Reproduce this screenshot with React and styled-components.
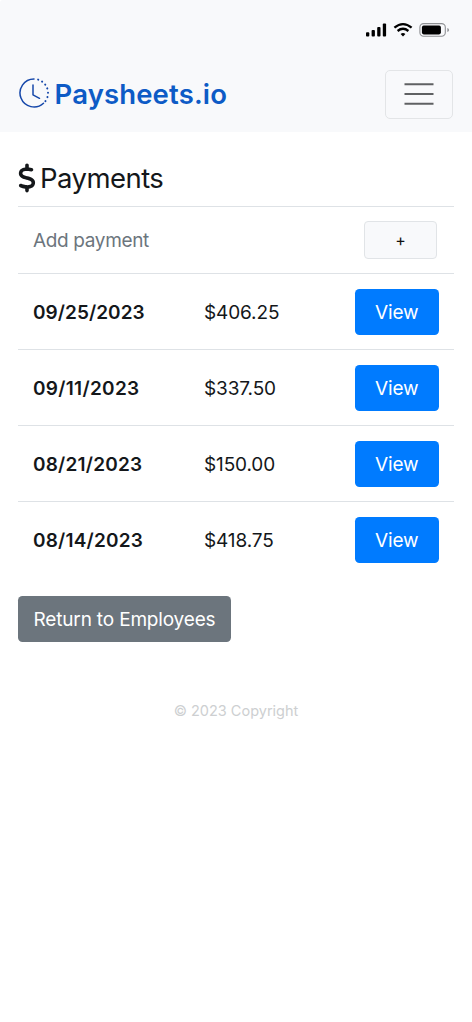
import React from "react";
import styled, { createGlobalStyle } from "styled-components";
import { FaDollarSign } from "react-icons/fa6";

const GlobalStyle = createGlobalStyle`
  * { box-sizing: border-box; }
  body { margin: 0; background: #fff; color: #14171a; font-family: Inter, "Liberation Sans", sans-serif; }
  button { font-family: inherit; margin: 0; cursor: pointer; }
`;

const Page = styled.div`
  width: 100%;
  min-height: 1022px;
  background: #fff;
`;
const Header = styled.header`
  height: 132px;
  background: #f8f9fb;
  border-top-left-radius: 3px;
`;
const StatusBar = styled.div`
  height: 60px;
  display: flex;
  justify-content: flex-end;
  padding: 20px 22px 0 0;
`;
const StatusIcons = styled.svg`
  display: block;
  width: 86px;
  height: 20px;
`;
const Navbar = styled.nav`
  display: flex;
  align-items: center;
  justify-content: space-between;
  height: 68px;
  padding: 0 19px 0 18px;
`;
const Brand = styled.div`
  display: flex;
  align-items: center;
  gap: 4.5px;
  color: #0d5bc6;
`;
const Clock = styled.svg`
  width: 32px;
  height: 32px;
  margin-top: -2px;
`;
const BrandName = styled.span`
  font-size: 27.5px;
  line-height: 34px;
  font-weight: 600;
  letter-spacing: 0.15px;
`;
const MenuButton = styled.button`
  display: flex;
  align-items: center;
  justify-content: center;
  width: 68px;
  height: 49px;
  padding: 0;
  border: 1.5px solid #e3e5e7;
  border-radius: 5px;
  background: transparent;
`;
const Main = styled.main`
  padding: 26px 18px 0;
`;
const Title = styled.h1`
  display: flex;
  align-items: center;
  gap: 5px;
  height: 40px;
  margin: 0 0 8px;
  font-size: 27.5px;
  font-weight: 400;
  line-height: 40px;
  letter-spacing: -0.55px;
  svg { width: 18px; height: 30px; margin: 0 -0.5px 0 -0.5px; }
`;
const Row = styled.div`
  display: grid;
  grid-template-columns: 171px 1fr auto;
  align-items: center;
  height: 76px;
  padding: 0 15px 0;
  border-top: 1.5px solid #dee2e6;
  font-size: 19px;
`;
const AddRow = styled(Row)`
  height: 67px;
  padding-right: 17px;
`;
const AddLabel = styled.span`
  color: #6c757d;
  letter-spacing: -0.35px;
`;
const DateText = styled.span`
  padding-top: 1px;
  font-weight: 600;
  letter-spacing: ${(p) => p.$spacing};
`;
const Amount = styled.span`
  padding-top: 1px;
  letter-spacing: -0.12px;
`;
const AddButton = styled.button`
  grid-column: 3;
  width: 73px;
  height: 38px;
  padding: 0;
  border: 1.5px solid #e1e4e7;
  border-radius: 4px;
  background: #f8f9fb;
  color: #111;
  font-size: 16px;
`;
const Button = styled.button`
  height: 46px;
  width: ${(p) => p.$width}px;
  padding: 1px 0 0;
  border: 0;
  border-radius: 4.5px;
  background: ${(p) => (p.$secondary ? "#6c757d" : "#007bff")};
  color: #fff;
  font-size: 19px;
  letter-spacing: -0.17px;
`;
const Actions = styled.div`
  padding-top: 19px;
`;
const Footer = styled.footer`
  padding-top: 59px;
  text-align: center;
  color: #cdcfd1;
  font-size: 14.5px;
  line-height: 20px;
`;

const payments = [
  { date: "09/25/2023", amount: "$406.25", spacing: "0.05px" },
  { date: "09/11/2023", amount: "$337.50", spacing: "0.3px" },
  { date: "08/21/2023", amount: "$150.00", spacing: "0.2px" },
  { date: "08/14/2023", amount: "$418.75", spacing: "0.2px" },
];

export default function App() {
  return (
    <Page>
      <GlobalStyle />
      <Header>
        <StatusBar>
          <StatusIcons viewBox="0 0 86 20" aria-hidden="true">
            <g fill="#000">
              <rect x="2" y="12.3" width="3.3" height="4.2" rx="0.9" />
              <rect x="7.6" y="10" width="3.3" height="6.5" rx="0.9" />
              <rect x="13.2" y="7" width="3.3" height="9.5" rx="0.9" />
              <rect x="18.8" y="3.5" width="3.3" height="13" rx="0.9" />
              <path d="M39 16.4 L36.6 14 Q39 12.1 41.4 14 Z" />
              <rect x="57.9" y="5.6" width="19" height="8.8" rx="1.8" />
            </g>
            <g fill="none" stroke="#000" strokeWidth="2.3">
              <path d="M30.4 7.7 Q39 0.5 47.6 7.7" />
              <path d="M33.6 11 Q39 6.6 44.4 11" />
            </g>
            <rect x="55.9" y="3.6" width="25.4" height="12.7" rx="3.7" fill="none" stroke="#8e9093" strokeWidth="1.1" />
            <path d="M83.3 8 Q85.1 8.3 85.1 10 Q85.1 11.7 83.3 12 Z" fill="#929497" />
          </StatusIcons>
        </StatusBar>
        <Navbar>
          <Brand>
            <Clock viewBox="0 0 32 32" fill="none" stroke="#1648aa" strokeWidth="1.5" strokeLinecap="round">
              <path d="M16 2 A14 14 0 1 0 25.5 26.3" />
              <path d="M16 2 A14 14 0 0 1 25.5 26.3" strokeDasharray="0.1 4.25" strokeDashoffset="-4.2" strokeWidth="2" />
              <path d="M15 8 V17.8 L21.5 21.3" strokeLinejoin="round" />
            </Clock>
            <BrandName>Paysheets.io</BrandName>
          </Brand>
          <MenuButton aria-label="Menu">
            <svg width="30" height="24" viewBox="0 0 30 24" stroke="#5f6163" strokeWidth="2">
              <path d="M.5 2.2H29.5M.5 12H29.5M.5 21.8H29.5" />
            </svg>
          </MenuButton>
        </Navbar>
      </Header>
      <Main>
        <Title><FaDollarSign />Payments</Title>
        <AddRow>
          <AddLabel>Add payment</AddLabel>
          <AddButton>+</AddButton>
        </AddRow>
        {payments.map((p) => (
          <Row key={p.date}>
            <DateText $spacing={p.spacing}>{p.date}</DateText>
            <Amount>{p.amount}</Amount>
            <Button $width={84.5}>View</Button>
          </Row>
        ))}
        <Actions>
          <Button $secondary $width={213}>Return to Employees</Button>
        </Actions>
        <Footer>© 2023 Copyright</Footer>
      </Main>
    </Page>
  );
}
